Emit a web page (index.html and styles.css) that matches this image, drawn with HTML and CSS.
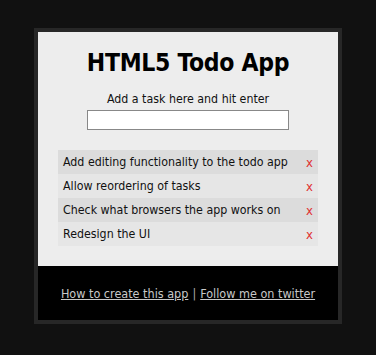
FILE: index.html
```html
<!DOCTYPE html>
<html>
<head>
<meta charset="utf-8">
<title>HTML5 Todo App</title>
<link rel="stylesheet" href="styles.css">
</head>
<body>
<div class="wrap">
  <div class="main">
    <h1 class="title">HTML5 Todo App</h1>
    <label class="hint" for="task">Add a task here and hit enter</label>
    <input class="task-input" id="task" type="text">
    <ul class="tasks">
      <li class="task"><span>Add editing functionality to the todo app</span><span class="del">x</span></li>
      <li class="task"><span>Allow reordering of tasks</span><span class="del">x</span></li>
      <li class="task"><span>Check what browsers the app works on</span><span class="del">x</span></li>
      <li class="task"><span>Redesign the UI</span><span class="del">x</span></li>
    </ul>
  </div>
  <div class="footer">
    <a href="#">How to create this app</a><span class="sep">|</span><a href="#">Follow me on twitter</a>
  </div>
</div>
</body>
</html>
```
FILE: styles.css
```css
html, body {
  margin: 0;
  padding: 0;
  background: #111111;
}
body {
  padding: 28px 0 0 34px;
  font-family: "DejaVu Sans Condensed", "DejaVu Sans", sans-serif;
}
.wrap {
  width: 300px;
  border: 4px solid #272727;
}
.main {
  background: #ededed;
  height: 234px;
  display: flex;
  flex-direction: column;
  align-items: center;
  box-sizing: border-box;
  padding-top: 16px;
}
.title {
  margin: 0;
  font-size: 24.5px;
  font-weight: bold;
  color: #000;
  line-height: 30px;
  letter-spacing: -0.3px;
}
.hint {
  margin-top: 13px;
  font-size: 12.3px;
  line-height: 16px;
  color: #111;
}
.task-input {
  margin: 3px 0 0;
  width: 202px;
  height: 20px;
  box-sizing: border-box;
  border: 1px solid #888;
  background: #fff;
  padding: 0;
}
.tasks {
  list-style: none;
  margin: 20px 0 0;
  padding: 0;
  width: 260px;
}
.task {
  display: flex;
  justify-content: space-between;
  align-items: center;
  height: 24px;
  padding: 0 5px;
  font-size: 12.3px;
  color: #111;
  background: #e6e6e6;
}
.task:nth-child(odd) {
  background: #dcdcdc;
}
.del {
  color: #e03030;
  font-size: 13px;
}
.footer {
  background: #000;
  height: 54px;
  display: flex;
  align-items: center;
  justify-content: center;
  font-size: 12.5px;
  color: #aaa;
}
.footer a {
  color: #c8c8c8;
  text-decoration: underline;
}
.sep {
  margin: 0 4px;
}
```
